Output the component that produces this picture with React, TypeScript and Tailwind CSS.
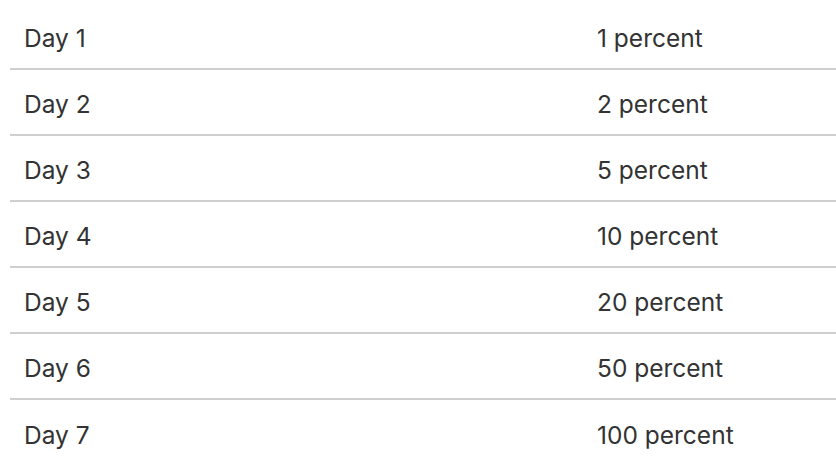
const rows = [
  ["Day 1", "1 percent"],
  ["Day 2", "2 percent"],
  ["Day 3", "5 percent"],
  ["Day 4", "10 percent"],
  ["Day 5", "20 percent"],
  ["Day 6", "50 percent"],
  ["Day 7", "100 percent"],
];

export default function App() {
  return (
    <div className="min-h-[464px] bg-white pl-[10px] pt-[4px] font-['Inter',sans-serif] text-[24.5px] text-[#333]">
      {rows.map(([day, pct], i) => (
        <div
          key={day}
          className={`flex h-[66px] items-center pt-1 ${i < rows.length - 1 ? "border-b-2 border-[#cfcfcf]" : ""}`}
        >
          <div className="w-[587px] pl-[14px]">{day}</div>
          <div>{pct}</div>
        </div>
      ))}
    </div>
  );
}
